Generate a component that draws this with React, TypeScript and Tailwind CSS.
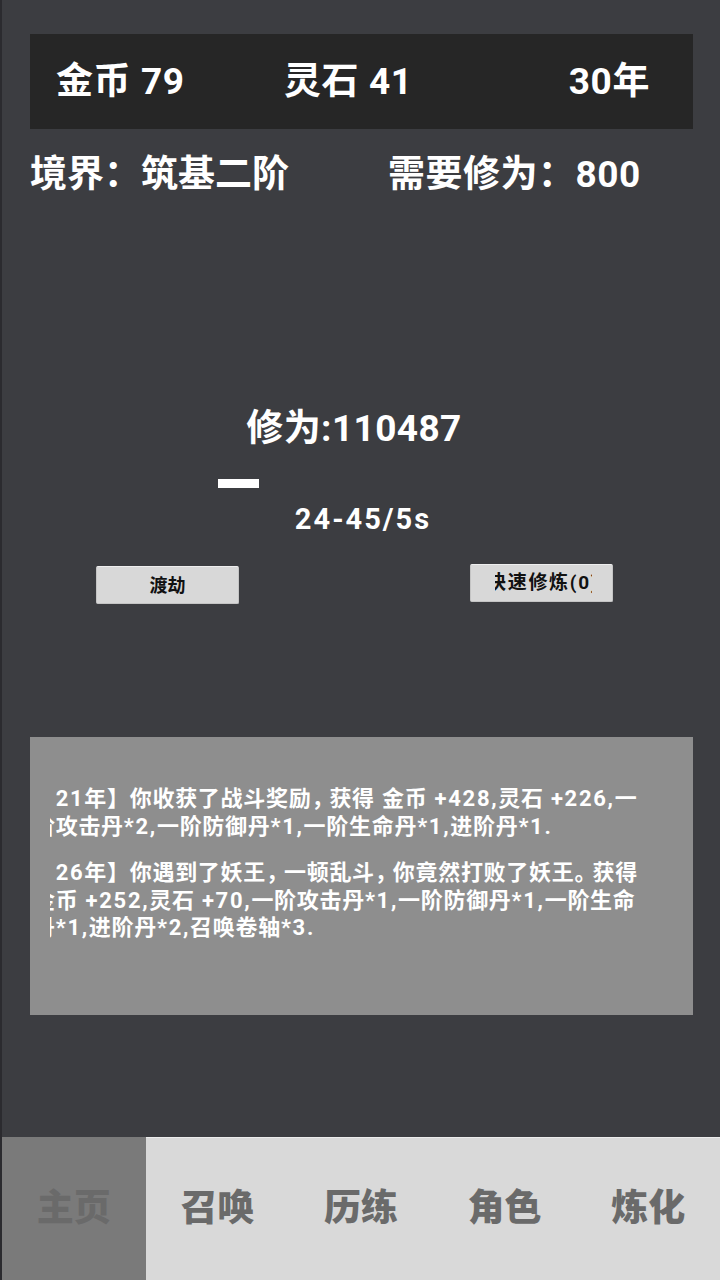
import React from 'react'

const tabs = ['主页', '召唤', '历练', '角色', '炼化']

const logs = [
  ['【21年】你收获了战斗奖励，获得 金币 +428,灵石 +226,一', '阶攻击丹*2,一阶防御丹*1,一阶生命丹*1,进阶丹*1.'],
  [
    '【26年】你遇到了妖王，一顿乱斗，你竟然打败了妖王。获得',
    '金币 +252,灵石 +70,一阶攻击丹*1,一阶防御丹*1,一阶生命',
    '丹*1,进阶丹*2,召唤卷轴*3.',
  ],
]

// the game's log font sets latin a bit wider and CJK punctuation a bit tighter
function LogLine({ text }: { text: string }) {
  const parts = text.split(/([，。【]|[\x00-\xff]+)/).filter(Boolean)
  return (
    <div className="whitespace-nowrap">
      {parts.map((p, i) => {
        if (p === '【') {
          return (
            <span key={i} className="relative -left-[10px]">
              {p}
            </span>
          )
        }
        if (p === '，' || p === '。') {
          return (
            <span key={i} className="tracking-[-4px]">
              {p}
            </span>
          )
        }
        if (/^[\x00-\xff]+$/.test(p)) {
          return (
            <span key={i} className="tracking-[1.7px]">
              {p}
            </span>
          )
        }
        return <span key={i}>{p}</span>
      })}
    </div>
  )
}

export default function App() {
  return (
    <div className="w-[720px] h-[1280px] bg-[#3c3d41] border-l-2 border-[#2b2b2f] flex flex-col overflow-hidden font-[Roboto,'Noto_Sans_CJK_SC',sans-serif]">
      {/* resources */}
      <div className="mt-[34px] ml-[28px] w-[663px] h-[95px] bg-[#262626] flex items-center pl-[26px] pr-[43px] text-white text-[37px] font-bold leading-none tracking-[0.6px]">
        <span className="w-[228px]">金币 79</span>
        <span className="flex-1">灵石 41</span>
        <span>30年</span>
      </div>

      {/* realm */}
      <div className="mt-[24px] pl-[28px] flex text-white text-[37px] font-bold leading-[44px]">
        <span className="w-[358px]">境界：筑基二阶</span>
        <span className="tracking-[0.5px]">需要修为：800</span>
      </div>

      {/* cultivation */}
      <div className="mt-[210px] flex justify-center pr-[14px] text-white text-[37px] font-bold leading-[44px] tracking-[0.4px]">
        修为:110487
      </div>
      <div className="mt-[28px] ml-[216px] w-[41px] h-[9px] bg-white" />
      <div className="mt-[14px] flex justify-center pl-[4px] text-white text-[29px] font-bold leading-[34px] tracking-[2px]">
        24-45/5s
      </div>

      <div className="mt-[28px] h-[40px] flex items-start">
        <button className="mt-[2px] ml-[94px] w-[143px] h-[38px] bg-[#d8d8d8] border border-[#c4c4c4] border-t-[#eeeeee] rounded-[2px] flex items-center justify-center text-[18px] font-bold text-[#111]">
          渡劫
        </button>
        <button className="ml-[231px] w-[143px] h-[38px] bg-[#d8d8d8] border border-[#c4c4c4] border-t-[#eeeeee] rounded-[2px] flex items-center pl-[24px] text-[19px] font-bold text-[#111]">
          <span className="w-[97px] overflow-hidden flex">
            <span className="-ml-[8px] whitespace-nowrap tracking-[1.7px]">快速修炼(0)</span>
          </span>
        </button>
      </div>

      {/* log */}
      <div className="mt-[133px] ml-[28px] w-[663px] h-[278px] bg-[#8e8e8e] pt-[48px]">
        <div className="ml-[20px] w-[601px] overflow-hidden">
          <div className="-ml-[17px] flex flex-col gap-[19px] text-white text-[22px] font-bold leading-[27.5px] tracking-[0.7px]">
            {logs.map((lines, i) => (
              <div key={i}>
                {lines.map((line) => (
                  <LogLine key={line} text={line} />
                ))}
              </div>
            ))}
          </div>
        </div>
      </div>

      {/* bottom tabs */}
      <div className="mt-auto h-[143px] flex">
        {tabs.map((t, i) => (
          <div
            key={t}
            className={`flex-1 flex items-center justify-center text-[37px] font-black text-[#6a6a6a] ${
              i === 0 ? 'bg-[#7a7a7a]' : 'bg-[#d9d9d9] border-t border-[#ececec]'
            }`}
          >
            {t}
          </div>
        ))}
      </div>
    </div>
  )
}
